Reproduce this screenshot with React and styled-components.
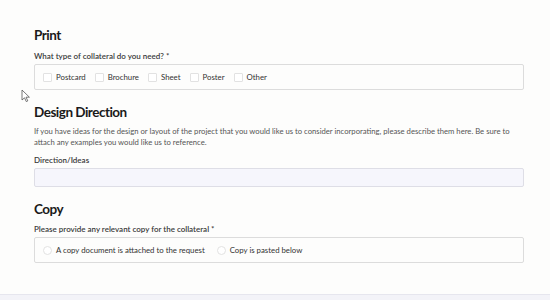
import styled, { createGlobalStyle } from 'styled-components'

const Global = createGlobalStyle`
  html, body {
    margin: 0;
    padding: 0;
    background: #fdfdfc;
  }
  body {
    font-family: Lato, "Noto Sans", sans-serif;
    color: #222;
  }
`

const Page = styled.div`
  position: relative;
  width: 550px;
  height: 300px;
  overflow: hidden;
  display: flex;
  flex-direction: column;
`

const Form = styled.div`
  flex: 1;
  padding: 24px 26px 0 34px;
`

const Section = styled.section`
  margin-bottom: ${(p) => p.gap || 0}px;
`

const Heading = styled.h2`
  margin: 0 0 ${(p) => p.space || 3}px;
  font-size: 13.5px;
  line-height: 22px;
  font-weight: 700;
  letter-spacing: -0.5px;
  color: #1a1a1a;
`

const Label = styled.div`
  font-size: 8px;
  line-height: 12px;
  font-weight: 600;
  color: #3a3a3a;
  margin-bottom: 2px;
`

const Help = styled.p`
  margin: 0 0 6px;
  font-size: 7.7px;
  line-height: 11px;
  color: #555;
`

const ChoiceBox = styled.div`
  height: 26px;
  box-sizing: border-box;
  border: 1px solid #dcdcdc;
  border-radius: 2px;
  display: flex;
  align-items: center;
  padding: 0 8px;
  gap: ${(p) => p.spacing || 9}px;
`

const Choice = styled.label`
  display: flex;
  align-items: center;
  gap: 4px;
  font-size: 7.8px;
  color: #333;
`

const Mark = styled.span`
  width: 9px;
  height: 9px;
  box-sizing: border-box;
  border: 1px solid #e2e2e2;
  border-radius: ${(p) => (p.round ? '50%' : '1px')};
  background: #fff;
`

const Input = styled.div`
  height: 19px;
  box-sizing: border-box;
  border: 1px solid #dedee6;
  border-radius: 2px;
  background: #f6f6fc;
`

const Footer = styled.div`
  height: 5px;
  border-top: 1px solid #e6e6ee;
  background: #f3f3f8;
`

const Cursor = styled.svg`
  position: absolute;
  left: 21px;
  top: 89px;
`

const printTypes = ['Postcard', 'Brochure', 'Sheet', 'Poster', 'Other']

export default function App() {
  return (
    <Page>
      <Global />
      <Form>
        <Section gap={11}>
          <Heading space={4}>Print</Heading>
          <Label>What type of collateral do you need? *</Label>
          <ChoiceBox spacing={9}>
            {printTypes.map((t) => (
              <Choice key={t}>
                <Mark />
                {t}
              </Choice>
            ))}
          </ChoiceBox>
        </Section>
        <Section gap={11}>
          <Heading>Design Direction</Heading>
          <Help>
            If you have ideas for the design or layout of the project that you would like us to consider
            incorporating, please describe them here. Be sure to attach any examples you would like us to
            reference.
          </Help>
          <Label>Direction/Ideas</Label>
          <Input />
        </Section>
        <Section>
          <Heading>Copy</Heading>
          <Label>Please provide any relevant copy for the collateral *</Label>
          <ChoiceBox spacing={12}>
            <Choice>
              <Mark round />
              A copy document is attached to the request
            </Choice>
            <Choice>
              <Mark round />
              Copy is pasted below
            </Choice>
          </ChoiceBox>
        </Section>
      </Form>
      <Footer />
      <Cursor width="10" height="14" viewBox="0 0 10 14">
        <path d="M1 1 L1 11 L3.5 8.8 L5.3 12.6 L6.8 11.9 L5 8.2 L8.4 8.2 Z" fill="#fff" stroke="#555" strokeWidth="0.8" strokeLinejoin="round" />
      </Cursor>
    </Page>
  )
}
